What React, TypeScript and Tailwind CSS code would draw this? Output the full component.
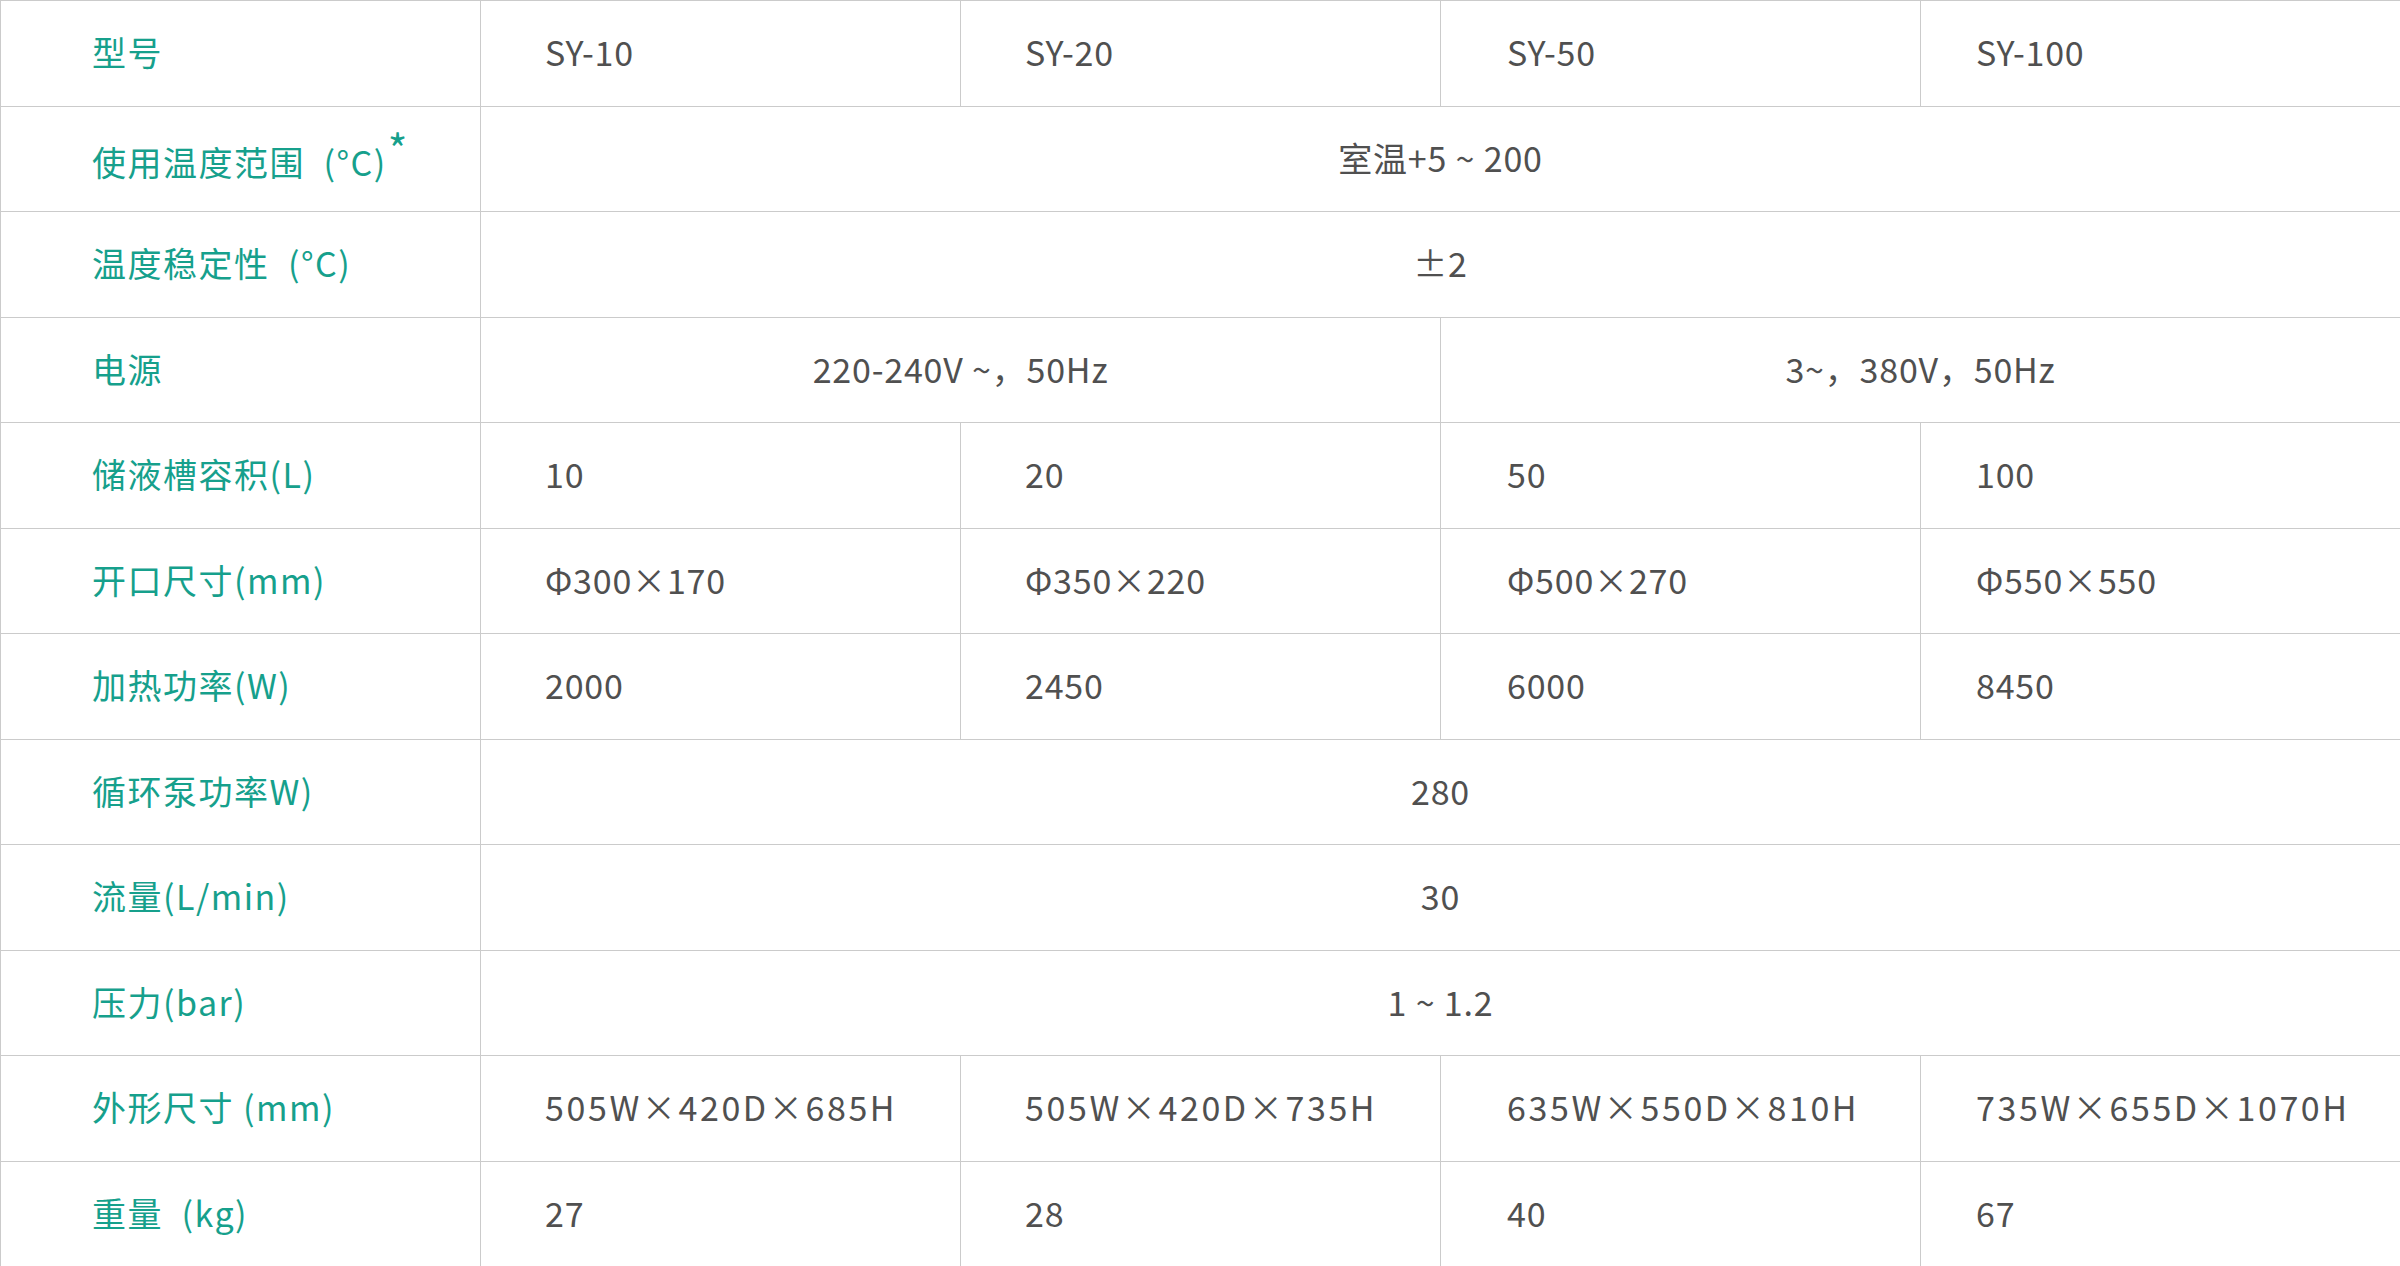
type Cell = { text: string; span?: number };
type Row = { label: string; star?: boolean; wide?: boolean; cells: Cell[] };

const rows: Row[] = [
  { label: "型号", cells: [{ text: "SY-10" }, { text: "SY-20" }, { text: "SY-50" }, { text: "SY-100" }] },
  { label: "使用温度范围\u2002(°C)", star: true, cells: [{ text: "室温+5 ~ 200", span: 4 }] },
  { label: "温度稳定性\u2002(°C)", cells: [{ text: "±2", span: 4 }] },
  { label: "电源", cells: [{ text: "220-240V ~，50Hz", span: 2 }, { text: "3~，380V，50Hz", span: 2 }] },
  { label: "储液槽容积(L)", cells: [{ text: "10" }, { text: "20" }, { text: "50" }, { text: "100" }] },
  { label: "开口尺寸(mm)", cells: [{ text: "Φ300×170" }, { text: "Φ350×220" }, { text: "Φ500×270" }, { text: "Φ550×550" }] },
  { label: "加热功率(W)", cells: [{ text: "2000" }, { text: "2450" }, { text: "6000" }, { text: "8450" }] },
  { label: "循环泵功率W)", cells: [{ text: "280", span: 4 }] },
  { label: "流量(L/min)", cells: [{ text: "30", span: 4 }] },
  { label: "压力(bar)", cells: [{ text: "1 ~ 1.2", span: 4 }] },
  {
    label: "外形尺寸 (mm)",
    wide: true,
    cells: [
      { text: "505W×420D×685H" },
      { text: "505W×420D×735H" },
      { text: "635W×550D×810H" },
      { text: "735W×655D×1070H" },
    ],
  },
  { label: "重量\u2002(kg)", cells: [{ text: "27" }, { text: "28" }, { text: "40" }, { text: "67" }] },
];

// left padding per data column (single cells are left aligned)
const pads = ["pl-[64px]", "pl-[64px]", "pl-[66px]", "pl-[55px]"];

export default function App() {
  return (
    <div className="w-[2400px] h-[1266px] bg-white font-['Noto_Sans_CJK_SC','Noto_Sans',sans-serif]">
      <table className="w-full table-fixed border-collapse">
        <colgroup>
          <col className="w-[480px]" />
          <col className="w-[480px]" />
          <col className="w-[480px]" />
          <col className="w-[480px]" />
          <col className="w-[480px]" />
        </colgroup>
        <tbody>
          {rows.map((row, i) => {
            let colIdx = 0;
            return (
              <tr key={i} className="h-[105.5px]">
                <td className="border border-[#cbcbcb] pl-[91px] pb-[2px] text-[34px] leading-none tracking-[1.5px] text-[#16a08c] whitespace-nowrap">
                  {row.label}
                  {row.star && (
                    <span className="relative -top-[10px] ml-[1px] text-[42px]">*</span>
                  )}
                </td>
                {row.cells.map((c, j) => {
                  const span = c.span ?? 1;
                  const pad = pads[colIdx];
                  colIdx += span;
                  const track = row.wide ? "tracking-[2.6px]" : "tracking-[0.8px]";
                  return (
                    <td
                      key={j}
                      colSpan={span}
                      className={
                        span > 1
                          ? "border border-[#cbcbcb] pb-[2px] text-center text-[34px] leading-none tracking-[0.8px] text-[#505050] whitespace-nowrap"
                          : `border border-[#cbcbcb] ${pad} ${track} pb-[2px] text-[34px] leading-none text-[#505050] whitespace-nowrap`
                      }
                    >
                      {c.text}
                    </td>
                  );
                })}
              </tr>
            );
          })}
        </tbody>
      </table>
    </div>
  );
}
